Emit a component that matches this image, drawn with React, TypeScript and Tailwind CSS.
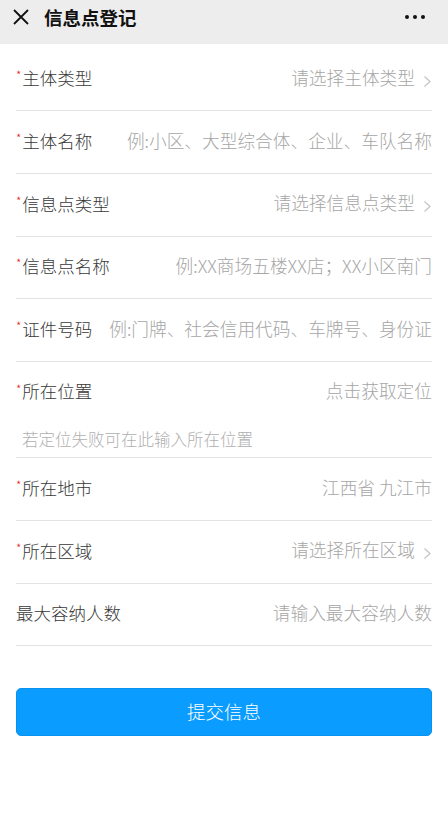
import React from "react";

const font = { fontFamily: '"Noto Sans CJK SC", "Noto Sans", sans-serif' };

function Chevron() {
  return (
    <svg width="9" height="12" viewBox="0 0 9 12" className="ml-[8px] mt-[7px] shrink-0">
      <path d="M1.5 1.5 L7 6.5 L1.5 11.5" fill="none" stroke="#c4c4c4" strokeWidth="1.2" />
    </svg>
  );
}

function Label({ text, required }: { text: string; required: boolean }) {
  return (
    <div className="flex items-center shrink-0 text-[17.5px] font-light text-[#383838] -mt-[2px]">
      {required && <span className="text-[#e02020] text-[12px] leading-none mr-[1px] -mt-[6px]">*</span>}
      <span>{text}</span>
    </div>
  );
}

type Row = { label: string; value: string; required: boolean; arrow?: boolean };

const rowsA: Row[] = [
  { label: "主体类型", value: "请选择主体类型", required: true, arrow: true },
  { label: "主体名称", value: "例:小区、大型综合体、企业、车队名称", required: true },
  { label: "信息点类型", value: "请选择信息点类型", required: true, arrow: true },
  { label: "信息点名称", value: "例:XX商场五楼XX店；XX小区南门", required: true },
  { label: "证件号码", value: "例:门牌、社会信用代码、车牌号、身份证", required: true },
];

const rowsB: Row[] = [
  { label: "所在地市", value: "江西省 九江市", required: true },
  { label: "所在区域", value: "请选择所在区域", required: true, arrow: true },
  { label: "最大容纳人数", value: "请输入最大容纳人数", required: false },
];

function FormRow({ row }: { row: Row }) {
  return (
    <div className="h-[62.75px] flex items-center justify-between border-b border-[#e3e3e3]">
      <Label text={row.label} required={row.required} />
      <div className="flex items-center -mt-[4px] min-w-0 ml-3">
        <span className="text-[17.7px] font-light text-[#a6a6a6] whitespace-nowrap overflow-hidden">{row.value}</span>
        {row.arrow && <Chevron />}
      </div>
    </div>
  );
}

export default function App() {
  return (
    <div className="w-[448px] h-[822px] bg-white" style={font}>
      <div className="h-[44px] bg-[#ededed] flex items-start pt-[3px] px-[13px]">
        <div className="h-[28px] flex items-center w-full">
          <svg width="16" height="16" viewBox="0 0 16 16" className="shrink-0">
            <path d="M1 1 L15 15 M15 1 L1 15" stroke="#111" strokeWidth="1.8" fill="none" />
          </svg>
          <span className="ml-[15px] text-[18.5px] font-bold text-[#111111] leading-none">信息点登记</span>
          <div className="ml-auto mr-[10px] flex gap-[4px]">
            <span className="w-[4px] h-[4px] rounded-full bg-[#111]" />
            <span className="w-[4px] h-[4px] rounded-full bg-[#111]" />
            <span className="w-[4px] h-[4px] rounded-full bg-[#111]" />
          </div>
        </div>
      </div>
      <div className="px-4 pt-[4.25px]">
        {rowsA.map((r) => (
          <FormRow key={r.label} row={r} />
        ))}
        <div className="border-b border-[#e3e3e3]">
          <div className="h-[61px] flex items-center justify-between">
            <Label text="所在位置" required={true} />
            <span className="text-[17.7px] font-light text-[#a6a6a6] -mt-[4px]">点击获取定位</span>
          </div>
          <div className="h-[34px] flex items-center pl-[6px] pb-[2px] text-[16.5px] font-light text-[#b0b0b0]">
            若定位失败可在此输入所在位置
          </div>
        </div>
        {rowsB.map((r) => (
          <FormRow key={r.label} row={r} />
        ))}
        <button className="mt-[42px] w-full h-[48px] rounded-[5px] bg-[#0a9cff] border border-[#0892f0] text-white text-[18.5px] font-light flex items-center justify-center">
          提交信息
        </button>
      </div>
    </div>
  );
}
